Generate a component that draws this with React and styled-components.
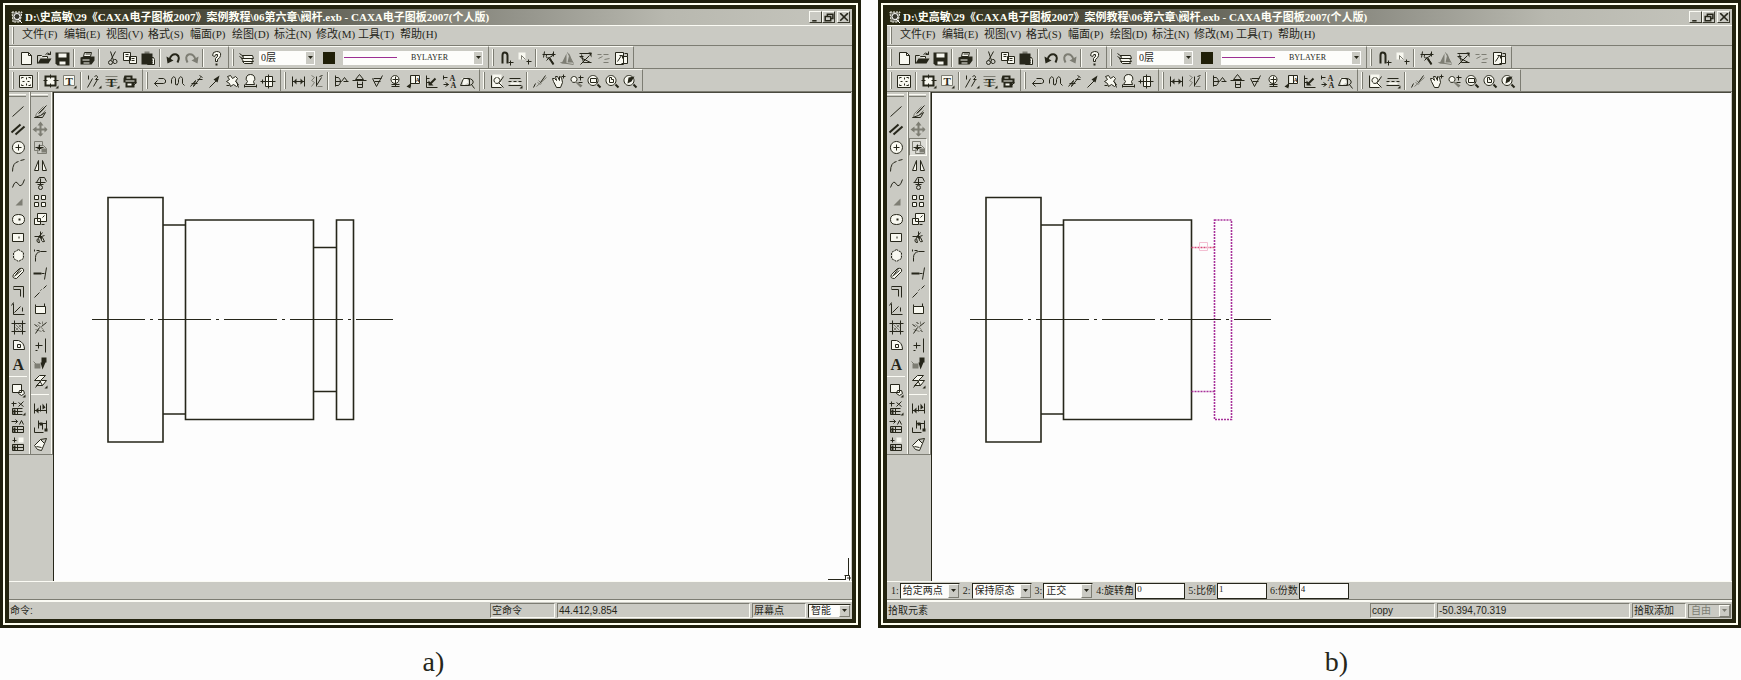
import React, { useId } from "react";
import styled, { createGlobalStyle, css } from "styled-components";

const INK = "#26261a";
const FACE = "#cacac3";
const SHADE = "#7d7d73";
const LIGHT = "#fbfbf4";

// Icons, all on a 16x16 grid
// w: white shape with outline, g: grey fill, k: dark fill, s: dark line, gs: grey line, t: letters
const icons = {
  newFile: { w: "M3 2H10L13 5V14H3Z", s: "M10 2V5H13" },
  open: { w: "M1 5H5L6 6H11V8", k: "M1 13L4 8H15L12 13Z", s: "M1 13V5M9 4Q11 1 14 4M14 1V4H11" },
  save: { k: "M1 2H15V15H3L1 13Z", w2: "M4 3H12V7H4ZM5 11H11V14H5Z" },
  print: { w: "M5 2H12L11 6H4Z", k: "M1 7L4 6H15V10L12 14H1ZM6 3H11V4H6Z", w2: "M3 9H10V10H3ZM4 12H10V13H4Z" },
  cut: { s: "M6 1L9 10M11 1L6 10M6 10A2 2 0 1 0 6 14A2 2 0 0 0 6 10M10 9A2 2 0 1 0 11 13A2 2 0 0 0 10 9" },
  copy: { w: "M1 2H8V10H1ZM7 6H14V13H7Z", s: "M3 4H6M3 6H6M9 8H12M9 10H12" },
  paste: { k: "M1 3H12V14H1Z", g: "M4 1H9V4H4Z", w: "M7 7H13L14 9V14H7Z", s: "M9 10H12M9 12H12" },
  undo: { b: "M4 9Q6 3 11 4Q15 6 12 12", k: "M1 6L8 10L2 13Z" },
  redo: { gb: "M12 9Q10 3 5 4Q1 6 4 12", g: "M15 6L8 10L14 13Z" },
  help: { w: "M4 5Q4 1 8 1Q13 1 12 5Q12 7 9 9V11H7V8Q10 6 9 4Q7 3 6 6Z", k: "M7 13H9V15H7Z" },
  layer: { w: "M4 5H14L15 8H5ZM3 8H13L15 11H5ZM4 11H13L14 13H6Z", s: "M1 3L5 6M1 6L4 8" },
  magnet: { b: "M4 13V5Q4 2 6 2Q9 2 9 5V13", s: "M10 12H15M12 10V15" },
  pick: { w2: "M2 2H9V9H2Z", gs: "M5 9V5M9 9L5 5", s: "M10 11H15M12 9V14" },
  tool1: { s: "M1 4H14M3 1L2 7M12 1V6M5 10L8 7L12 13M5 4Q4 9 8 7Q12 6 11 3", b: "M8 8L12 14" },
  tool2: { g: "M7 3L2 13H7ZM10 3L13 12H8Z", gs: "M1 12L14 14M8 2L14 13" },
  tool3: { s: "M2 3H14M3 7L13 12M12 5L3 14M4 4L6 12H14M2 6H6", k: "M11 2H14V7Z" },
  tool4: { gs: "M2 4H6M8 4H13M3 8L7 6M9 9L14 8M8 12H13" },
  tool5: { w: "M2 2H10V14H2ZM9 6H14V13H8", s: "M4 11L8 5M6 5H9V8M11 3L14 3V6" },
  frame: { w: "M1 2H14V14H1Z", s: "M4 8H6M9 8H11M8 4V6M8 10V12M3 5V4H5M12 5V4H10M3 11V12H5M12 11V12H10" },
  paper: { w: "M2 3H12V12H2Z", b: "M2 3H12V12H2Z", s: "M7 1V5M7 10V14M0 7H4M10 7H15", k: "M12 15H15V12Z" },
  title: { w2: "M2 2H13V12H2Z", gs: "M2 2H13V12H2Z", t: [[4, 11, "T", 11]], k: "M12 15H15V12Z" },
  serial: { s: "M1 14L6 5M7 13L11 6M2 2V6M8 3Q11 1 11 4L9 6H12", k: "M12 15H15V12Z" },
  textT: { gs: "M1 3H13M1 6H13M1 9H13M2 12H12", t: [[3, 13, "T", 12]], k: "M12 15H15V12Z" },
  table: { k: "M2 2H10V5H14V10H12V14H3V9H1V5Z", w2: "M4 4H8V5H4ZM3 7H12V8H3ZM5 10H9V12H5Z", s: "M10 13L14 9" },
  arrowBack: { s: "M6 5H11Q14 6 13 9L11 10H2M5 7L2 10L5 13" },
  wave: { s: "M1 10V6Q3 1 5 5V11Q7 13 8 9V6Q10 1 12 5V10L14 12" },
  zig: { s: "M2 13L7 7L5 13L12 4M3 10H9M9 6H14M11 2L14 4" },
  arrow: { s: "M3 14L10 7", k: "M13 2L11 9L7 6Z" },
  gears: { w: "M3 3L6 2L8 5L11 3L13 5L11 8L14 11L12 13L9 11L6 13L5 10L2 8L5 6Z", s: "M2 12H5M12 8L14 14" },
  stamp: { w: "M8 1A4 4 0 0 1 11 8L12 11H3L5 8A4 4 0 0 1 8 1Z", s: "M2 13H14M2 11V14M14 11V14" },
  hole: { w: "M5 3H12V13H5Z", s: "M0 8H15M8 1V15M2 6V10" },
  dim: { s: "M2 3V13M14 3V13M2 8H14", k: "M3 8L6 5V11ZM13 8L10 5V11Z" },
  coord: { gs: "M3 2L6 4L3 7L6 9L3 13M9 13H14", s: "M8 3V13M8 12L13 4M11 3L14 2" },
  weld: { s: "M2 2V13M2 4H5Q9 8 5 12H2M2 8H8L11 4L14 8M10 8H15" },
  datum: { s: "M8 1L12 6H4ZM1 7H15M6 8V14H11V8M6 11H11" },
  rough: { s: "M3 5L7 13L13 2M5 8H11M4 5H12" },
  tolerance: { w: "M8 2A4 4 0 1 1 7 2ZM4 11H12", s: "M5 6H11M8 3V13M4 13H12" },
  label: { w2: "M6 2H15V10H6Z", s: "M5 2H14V10H5ZM10 2V10M5 6V13H2", k: "M1 13L5 10V15Z", t: [[10, 8, "A", 6]] },
  leader: { s: "M3 2V14H14M3 5H6M3 9H6", b: "M6 11L12 5", k: "M5 12V7L10 12Z" },
  section: { s: "M2 4H6M2 2V6M2 11H7M4 9L7 11L4 13", t: [[8, 7, "A", 8], [9, 14, "A", 8]] },
  detail: { w2: "M2 5L7 4L9 9L4 12Z", s: "M1 12L4 5H10V12ZM9 6A3 3 0 1 1 9 11M12 11L15 15" },
  find: { w2: "M3 1H12V14H3Z", s: "M2 2V14H12M7 4A3 3 0 1 0 8 4M9 9L14 14M14 3L10 9" },
  linetype: { s: "M2 5H13M1 8H4M6 8H9M11 8H14M1 12H14", w2: "M3 9H12V11H3Z", k: "M12 15H15V12Z" },
  brush: { s: "M3 10L1 14M13 2L8 9", gs: "M4 13L14 4M5 9L8 11M6 7L9 10" },
  hand: { w: "M3 8L2 5L4 5L6 7L5 3L7 3L9 7L9 3L11 4L12 9L10 14H6Z", s: "M11 3H15M13 1V5" },
  zoomDyn: { w: "M6 3A3 3 0 1 1 5 3Z", g: "M8 8L14 12L12 14L7 9Z", s: "M10 4H15M12 2V7M10 9H14" },
  zoomWin: { w: "M7 2A5 5 0 1 1 6 2Z", s: "M4 5H10V9H4Z", b: "M11 11L14 14" },
  zoomAll: { w: "M7 2A5 5 0 1 1 6 2Z", s: "M5 4V9H9V6H7V4Z", b: "M11 11L14 14" },
  zoomPrev: { w: "M7 2A5 5 0 1 1 6 2Z", k: "M5 10L6 4L12 3L9 8Z", b: "M11 11L14 14" },
  line: { s: "M2 13L13 3" },
  parallel: { b: "M1 11L10 3M5 13L14 5" },
  circle: { w: "M8 2A6 6 0 1 1 7.900 2Z", s: "M5 8H11M8 5V11" },
  arc: { s: "M2 14Q2 5 8 4M10 3L14 2" },
  spline: { s: "M2 12Q5 3 8 9Q11 13 14 4" },
  point: { g: "M5 12L12 5V12Z" },
  ellipse: { w: "M8 3Q14 3 14 8Q14 13 8 13Q2 13 2 8Q2 3 8 3Z", k: "M8 7H10V9H8Z" },
  rect: { w: "M2 4H13V12H2Z", k: "M8 7H9V9H8Z" },
  polygon: { w2: "M8 3L12 5V11L8 13L4 11V5Z", dash: "M8 2L13 5V11L8 14L3 11V5Z", k: "M7 7H9V9H7Z" },
  capsule: { w: "M3 9L9 3Q14 2 13 6L6 13Q1 13 3 9Z", s: "M5 10L11 5M10 3L4 11" },
  offset: { s: "M3 3H13V14M3 6H10V13M3 4V5" },
  axes: { s: "M3 2V13H14M1 4L3 1M4 11L10 5M12 6V10" },
  hatch: { s: "M1 4H15M1 12H15M4 1V15M12 1V15", gs: "M5 5L11 11M8 5L11 8M5 8L8 11M11 5L5 11" },
  profile: { w: "M3 3H8Q14 5 14 12H3Z", s: "M7 7H10V10H7Z" },
  letter: { t: [[2, 14, "A", 16]] },
  block: { w: "M2 2H11V10H2ZM9 8H13L14 11L11 13L8 11Z", k: "M12 15H15V12Z" },
  lib1: { s: "M2 8H12M2 11H12M2 14H12M2 8V14M7 8V14M3 1V6M1 3H6M8 2L13 6M13 1L8 6", b: "M4 9V14", k: "M12 15H15V12Z" },
  lib2: { s: "M2 8H13M2 11H13M2 14H13M2 8V14M7 8V14M13 8V14M1 3H7M5 1L7 3L5 5M9 6L11 2L13 6", b: "M4 9V14" },
  lib3: { s: "M2 8H13M2 11H13M2 14H13M2 8V14M7 8V14M13 8V14M4 1V6M2 4H6", w2: "M8 1H13V6H8Z", b: "M4 9V14" },
  erase: { s: "M2 14H10L13 9L8 12ZM14 2L6 10", gs: "M11 3L4 10L3 13M12 5L7 10M13 7L8 12" },
  move: { gb: "M8 2V14M2 8H14", g: "M8 0L11 4H5ZM8 15L11 12H5ZM0 8L4 5V11ZM15 8L12 5V11Z" },
  copyMove: { gs: "M2 2H10V6M2 2V11H6M6 6H11L14 9V14H5Z", g: "M9 9H14V13H9Z", s: "M3 8H11M7 5V11M5 9H9" },
  mirror: { w: "M6 3V13H2ZM10 3V13H14Z" },
  rotate: { s: "M4 7L7 2H12L14 6M3 7H13M8 3V9M5 9H11M8 10A2 2 0 1 0 8 14A2 2 0 1 0 8 10" },
  array: { w: "M2 2H6V6H2ZM9 2H13V6H9ZM2 9H6V13H2ZM9 9H13V13H9Z" },
  scale: { w: "M5 2H14V10H5ZM2 7H8V13H2Z", s: "M10 6L12 4M9 13H12" },
  trim: { s: "M2 7H8M8 2V7M10 3L6 8M12 6L6 8M6 9A2 2 0 1 0 7 13ZM10 8A2 2 0 1 0 12 12Z", b: "M7 6L9 9" },
  fillet: { s: "M2 2V4M3 14V10Q3 5 8 4H14M4 3H7" },
  extend: { b: "M1 8H9", s: "M9 8H12M14 2L12 14" },
  breakLine: { s: "M2 14L7 9M8 7L9 6M11 5L14 2" },
  stretch: { w: "M3 5H13V12H3Z", s: "M3 3V5M12 2V5" },
  explode: { s: "M3 14L7 8M9 7L14 3M2 5L5 7M10 11L12 12M6 3L8 4", gs: "M5 5L11 10M3 10L9 12M10 2V5" },
  divide: { s: "M13 1V15M3 8H10M6 5V11M3 13H5" },
  sample: { g: "M2 8H8V13H2Z", k: "M9 2H14V7H9ZM8 7H13L10 14Z", gs: "M1 6L4 9" },
  sheet: { w: "M2 7L7 2H13L8 7ZM4 12L9 7H14L10 12Z", s: "M3 14L7 9M7 7L10 12", k: "M12 15H15V12Z" },
  dimEdit: { s: "M2 3V13M14 3V13M2 10H14M8 5V11", k: "M3 10L6 7V13ZM13 7L10 3V9Z" },
  dimEdit2: { s: "M6 2V10M14 2V12M6 5H14M2 9V14H11M10 5V11", k: "M7 4H10V7H7ZM12 10H15V13H12Z" },
  format: { w: "M2 9L8 3L12 7L9 14L5 13Z", s: "M8 3L14 2L12 7M4 10L9 11" },
};

const Icon = ({ name }) => {
  const i = icons[name];
  return (
    <IconSvg viewBox="-0.5 -0.5 16 16" aria-hidden="true">
      {i.w && <path d={i.w} fill="#f8f8f0" stroke={INK} />}
      {i.g && <path d={i.g} fill={SHADE} />}
      {i.gb && <path d={i.gb} fill="none" stroke={SHADE} strokeWidth="2" />}
      {i.k && <path d={i.k} fill={INK} />}
      {i.w2 && <path d={i.w2} fill="#f8f8f0" />}
      {i.gs && <path d={i.gs} fill="none" stroke={SHADE} />}
      {i.dash && <path d={i.dash} fill="none" stroke={INK} strokeDasharray="2 1" />}
      {i.s && <path d={i.s} fill="none" stroke={INK} />}
      {i.b && <path d={i.b} fill="none" stroke={INK} strokeWidth="2" />}
      {i.t && i.t.map(([x, y, ch, size]) => (
        <text key={y} x={x} y={y} fontSize={size} fontWeight="bold" fontFamily="Liberation Serif, serif" fill={INK}>{ch}</text>
      ))}
    </IconSvg>
  );
};

const menus = [
  ["文件", "(F)"], ["编辑", "(E)"], ["视图", "(V)"], ["格式", "(S)"], ["幅面", "(P)"],
  ["绘图", "(D)"], ["标注", "(N)"], ["修改", "(M)"], ["工具", "(T)"], ["帮助", "(H)"],
];

// "|" is a separator
const fileTools = ["newFile", "open", "save", "|", "print", "|", "cut", "copy", "paste", "|", "undo", "redo", "|", "help"];
const snapTools = ["magnet", "pick", "|", "tool1", "tool2", "tool3", "tool4", "tool5"];
const lowerTools = [
  ["frame", "|", "paper", "title", "|", "serial", "textT", "table"],
  ["arrowBack", "wave", "zig", "arrow", "gears", "stamp", "hole"],
  ["dim", "coord", "|", "weld", "datum", "rough", "tolerance", "label", "leader", "section", "detail"],
  ["find", "linetype", "|", "brush", "hand", "zoomDyn", "zoomWin", "zoomAll", "zoomPrev"],
];
const drawTools = ["line", "parallel", "circle", "arc", "spline", "point", "ellipse", "rect", "polygon", "capsule", "offset", "axes", "hatch", "profile", "letter", "|", "block", "lib1", "lib2", "lib3"];
const editTools = ["erase", "move", "copyMove", "mirror", "rotate", "array", "scale", "trim", "fillet", "extend", "breakLine", "stretch", "explode", "divide", "sample", "sheet", "|", "dimEdit", "dimEdit2", "format"];

const Tools = ({ items, vertical, active }) =>
  items.map((name, i) =>
    name === "|" ? (
      <Separator key={i} $vertical={vertical} />
    ) : (
      <ToolButton key={i} type="button" aria-label={name} aria-pressed={active === name}>
        <Icon name={name} />
      </ToolButton>
    )
  );

const Combo = ({ value, label, prefix, width, kind, disabled, children }) => {
  const id = useId();
  return (
    <>
      {prefix && <FieldLabel htmlFor={id}>{prefix}</FieldLabel>}
      <ComboBox $width={width} $kind={kind}>
        <Select id={id} aria-label={label} defaultValue={value} disabled={disabled} $kind={kind}>
          <option>{value}</option>
        </Select>
        {children}
        <ArrowBox $kind={kind}>
          <svg width="5" height="3" viewBox="0 0 5 3"><path d="M0 0H5L2.500 3Z" fill={disabled ? SHADE : INK} /></svg>
        </ArrowBox>
      </ComboBox>
    </>
  );
};

const NumberField = ({ label, value }) => {
  const id = useId();
  return (
    <>
      <FieldLabel htmlFor={id}>{label}</FieldLabel>
      <TextInput id={id} defaultValue={value} />
    </>
  );
};

// Stepped shaft; with `picked` the right hand flange is the dashed selection
const Shaft = ({ picked }) => (
  <Drawing viewBox="54 93 500 489" preserveAspectRatio="xMinYMin meet" role="img" aria-label="阀杆">
    <g fill="none" stroke={INK} strokeWidth="1.600">
      <path d="M108 197.500H163V442H108Z" />
      <path d="M163 225H185.500M163 414H185.500" />
      <path d="M185.500 220H313.500V419.500H185.500Z" />
      {!picked && <path d="M313.500 247.500H336.500M313.500 391.500H336.500M336.500 220H353.500V419.500H336.500Z" />}
    </g>
    {picked && (
      <g fill="none" stroke="#a8329a" strokeWidth="1.600" strokeDasharray="2 1">
        <path d="M313.500 391.500H336.500M336.500 220H353.500V419.500H336.500Z" />
        <path d="M313.500 247.500H336.500" stroke="#d8487a" />
        <path d="M321.500 242.500H329.500V250.500H321.500Z" stroke="#f3bfd2" strokeWidth="1" strokeDasharray="none" />
      </g>
    )}
    <path d="M92 319.500H393" stroke={INK} fill="none" strokeDasharray="53 5 3 5" />
  </Drawing>
);

const Workspace = ({ picked, children, message, command, coords, state, snap }) => (
  <Frame>
    <Inner>
      <TitleBar>
        <svg width="14" height="14" viewBox="0 0 14 14" aria-hidden="true">
          <path d="M2 2H12L10 12H3Z" fill="#77776a" stroke="#f4f4ea" strokeDasharray="2 1" />
          <circle cx="7" cy="6.500" r="3" fill="#34342a" stroke="#fff" />
          <path d="M8 9L12 13" stroke="#fff" />
        </svg>
        <Title>D:\史高敏\29《CAXA电子图板2007》案例教程\06第六章\阀杆.exb - CAXA电子图板2007(个人版)</Title>
        <WindowButton type="button" aria-label="最小化"><svg viewBox="0 0 10 8"><path d="M2 7H6" /></svg></WindowButton>
        <WindowButton type="button" aria-label="还原"><svg viewBox="0 0 10 8"><path d="M4 3V1H9V5H7M2 3H7V7H2Z" /></svg></WindowButton>
        <WindowButton type="button" aria-label="关闭" $apart><svg viewBox="0 0 10 8"><path d="M2 0L9 7M9 0L2 7" /></svg></WindowButton>
      </TitleBar>
      <MenuBar>
        <Grip />
        {menus.map(([name, key]) => <MenuItem key={name} type="button">{name}{key}</MenuItem>)}
      </MenuBar>
      <ToolRow>
        <Strip><Grip /><Tools items={fileTools} /></Strip>
        <Strip>
          <Grip />
          <Tools items={["layer"]} />
          <LayerFields>
            <Combo label="图层" value="0层" width={56} kind="flat" />
            <Swatch type="button" aria-label="颜色" />
            <Combo label="线型" value="BYLAYER" width={140} kind="line">
              <LineSample />
            </Combo>
          </LayerFields>
        </Strip>
        <Strip><Grip /><Tools items={snapTools} /></Strip>
      </ToolRow>
      <ToolRow>
        {lowerTools.map((items, i) => <Strip key={i}><Grip /><Tools items={items} /></Strip>)}
      </ToolRow>
      <Main>
        <Side>
          <SideColumn><SideGrip /><Tools items={drawTools} vertical /></SideColumn>
          <SideColumn><SideGrip /><Tools items={editTools} vertical active={picked ? "copyMove" : ""} /></SideColumn>
        </Side>
        <Canvas>
          <Shaft picked={picked} />
          {!picked && (
            <Cursor viewBox="0 0 23 23" aria-hidden="true">
              <path d="M20.500 0V17M0 21.500H17M16.500 17.500H21.500V22.500M17.500 17V22M19 20H23" fill="none" stroke={INK} />
            </Cursor>
          )}
        </Canvas>
      </Main>
      <Prompt>{children}</Prompt>
      <StatusBar>
        <Message>{message}</Message>
        <Cell $width={65}>{command}</Cell>
        <Cell $width={193}>{coords}</Cell>
        <Cell $width={54}>{state}</Cell>
        <Combo label="捕捉方式" value={snap} width={43} kind="small" disabled={picked} />
      </StatusBar>
    </Inner>
  </Frame>
);

export default function App() {
  return (
    <>
      <GlobalStyle />
      <Page>
        <Figure>
          <Workspace message="命令:" command="空命令" coords="44.412,9.854" state="屏幕点" snap="智能" />
          <Caption>a)</Caption>
        </Figure>
        <Figure>
          <Workspace picked message="拾取元素" command="copy" coords="-50.394,70.319" state="拾取添加" snap="自由">
            <Combo prefix="1:" value="给定两点" width={60} />
            <Combo prefix="2:" value="保持原态" width={60} />
            <Combo prefix="3:" value="正交" width={50} />
            <NumberField label="4:旋转角" value="0" />
            <NumberField label="5:比例" value="1" />
            <NumberField label="6:份数" value="4" />
          </Workspace>
          <Caption $shift>b)</Caption>
        </Figure>
      </Page>
    </>
  );
}

const GlobalStyle = createGlobalStyle`
  * {
    box-sizing: border-box;
  }
  body {
    margin: 0;
    background: #fdfdfd;
    color: ${INK};
    font-family: "Liberation Serif", "Noto Sans CJK SC", serif;
    font-size: 11px;
  }
  button, select, input {
    font: inherit;
    color: inherit;
    margin: 0;
    padding: 0;
    border: 0;
    border-radius: 0;
    background: none;
  }
`;
const Page = styled.main`
  display: grid;
  grid-template-columns: minmax(0, 861fr) minmax(0, 863fr);
  gap: 17px;
`;
const Figure = styled.figure`
  margin: 0;
`;
const Caption = styled.figcaption`
  padding-top: 18px;
  padding-left: ${({ $shift }) => ($shift ? "54px" : "6px")};
  font-size: 28px;
  line-height: 32px;
  text-align: center;
`;
const Frame = styled.section`
  border: 3px solid #1e1e0c;
  padding: 2px;
  background: #fffff0;
`;
const Inner = styled.div`
  border: 4px solid #24240f;
  background: ${FACE};
`;
const TitleBar = styled.header`
  display: flex;
  align-items: center;
  height: 16px;
  padding: 0 2px 0 1px;
  background: linear-gradient(90deg, #26260f, #56564a 30%, #93938a 60%, #b8b8af 78%, #c6c6be);
`;
const Title = styled.h1`
  flex: 1;
  min-width: 0;
  margin: 0 0 0 1px;
  overflow: hidden;
  white-space: nowrap;
  color: #fffff6;
  font-size: 11px;
  font-weight: bold;
  line-height: 14px;
`;
const WindowButton = styled.button`
  width: 13px;
  height: 12px;
  margin-left: ${({ $apart }) => ($apart ? "2px" : "0")};
  border: 1px solid;
  border-color: ${LIGHT} #3a3a2e #3a3a2e ${LIGHT};
  background: ${FACE};
  svg {
    display: block;
    width: 11px;
    height: 9px;
    fill: none;
    stroke: ${INK};
    stroke-width: 1.4;
  }
`;
const MenuBar = styled.nav`
  display: flex;
  align-items: center;
  height: 21px;
  border-top: 1px solid ${LIGHT};
  border-bottom: 1px solid ${SHADE};
`;
const MenuItem = styled.button`
  width: 42px;
  height: 19px;
  padding: 0 0 3px 5px;
  line-height: 16px;
  text-align: left;
  white-space: nowrap;
`;
const ToolRow = styled.div`
  display: flex;
  height: 23px;
  border-bottom: 1px solid ${SHADE};
`;
const Strip = styled.div`
  display: flex;
  flex: none;
  align-items: center;
  padding-right: 3px;
  border-top: 1px solid ${LIGHT};
  border-right: 1px solid ${SHADE};
`;
const Grip = styled.span`
  flex: none;
  width: 2px;
  height: 17px;
  margin: 0 3px;
  border-left: 1px solid ${LIGHT};
  border-right: 1px solid ${SHADE};
`;
const ToolButton = styled.button`
  display: flex;
  flex: none;
  align-items: center;
  justify-content: center;
  width: 18px;
  height: 18px;
  border: 1px solid transparent;
  &[aria-pressed="true"] {
    border-color: ${SHADE} ${LIGHT} ${LIGHT} ${SHADE};
    background: #dcdcd6;
  }
`;
const IconSvg = styled.svg`
  flex: none;
  width: 16px;
  height: 16px;
`;
const Separator = styled.span`
  flex: none;
  ${({ $vertical }) =>
    $vertical
      ? css`
          width: 18px;
          height: 1px;
          margin: 4px 0;
          background: ${LIGHT};
        `
      : css`
          width: 1px;
          height: 18px;
          margin: 0 3px;
          background: ${LIGHT};
          box-shadow: -1px 0 ${SHADE};
        `}
`;
const LayerFields = styled.div`
  display: flex;
  align-items: center;
  gap: 8px;
  padding: 0 2px 0 4px;
`;
const Swatch = styled.button`
  width: 12px;
  height: 12px;
  background: #201f08;
`;
const LineSample = styled.span`
  position: absolute;
  top: 6px;
  left: 1px;
  width: 53px;
  height: 1px;
  background: #9c2f93;
  pointer-events: none;
`;
const ComboBox = styled.span`
  position: relative;
  display: inline-block;
  flex: none;
  width: ${({ $width }) => $width}px;
  height: ${({ $kind }) => ($kind ? "14px" : "16px")};
`;
const Select = styled.select`
  display: block;
  appearance: none;
  width: 100%;
  height: 100%;
  padding-left: 2px;
  border: 1px solid ${INK};
  border-right-color: ${FACE};
  border-bottom-color: ${FACE};
  background: #fdfdfb;
  font-size: 10px;
  line-height: 12px;
  ${({ $kind }) =>
    ($kind === "flat" || $kind === "line") &&
    css`
      border: 0;
    `}
  ${({ $kind }) =>
    $kind === "line" &&
    css`
      padding-left: 68px;
      font-size: 8px;
    `}
  &:disabled {
    border-color: ${SHADE};
    background: ${FACE};
    color: ${SHADE};
    opacity: 1;
  }
`;
const ArrowBox = styled.span`
  position: absolute;
  top: 1px;
  right: 1px;
  bottom: 1px;
  display: flex;
  align-items: center;
  justify-content: center;
  width: 11px;
  background: ${FACE};
  border: 1px solid;
  border-color: ${LIGHT} ${SHADE} ${SHADE} ${LIGHT};
  pointer-events: none;
  ${({ $kind }) =>
    ($kind === "flat" || $kind === "line") &&
    css`
      width: 8px;
      border-color: ${FACE};
    `}
`;
const Main = styled.div`
  display: flex;
  min-height: 489px;
`;
const Side = styled.aside`
  display: flex;
  align-items: flex-start;
  width: 45px;
  flex: none;
  border-right: 1px solid ${INK};
`;
const SideColumn = styled.div`
  display: flex;
  flex-direction: column;
  align-items: flex-start;
  width: 22px;
  padding-bottom: 1px;
  border-right: 1px solid ${SHADE};
  border-bottom: 1px solid ${SHADE};
  box-shadow: inset -1px 0 ${LIGHT};
`;
const SideGrip = styled.span`
  width: 17px;
  height: 3px;
  margin: 2px 0 5px;
  border-top: 1px solid ${LIGHT};
  border-bottom: 1px solid ${SHADE};
`;
const Canvas = styled.div`
  position: relative;
  flex: 1;
  min-width: 0;
  margin-right: 1px;
  border-top: 1px solid #4a4a40;
  background: #fdfdfd;
`;
const Drawing = styled.svg`
  display: block;
  width: 500px;
  max-width: 100%;
  margin-bottom: -1px;
`;
const Cursor = styled.svg`
  position: absolute;
  right: 0;
  bottom: 0;
  width: 23px;
  height: 23px;
`;
const Prompt = styled.div`
  display: flex;
  align-items: center;
  gap: 1px;
  height: 19px;
  padding-left: 2px;
  border-top: 1px solid ${LIGHT};
  border-bottom: 1px solid ${SHADE};
`;
const FieldLabel = styled.label`
  flex: none;
  padding-left: 2px;
  white-space: nowrap;
  font-size: 10px;
  line-height: 16px;
`;
const TextInput = styled.input`
  width: 50px;
  height: 16px;
  padding: 0 1px 4px;
  border: 1px solid ${INK};
  background: #fdfdfb;
  font-size: 9px;
`;
const StatusBar = styled.footer`
  display: flex;
  align-items: center;
  gap: 2px;
  height: 19px;
  padding-right: 1px;
  border-top: 2px solid ${LIGHT};
  font-family: "Liberation Sans", "Noto Sans CJK SC", sans-serif;
  font-size: 10px;
`;
const Message = styled.p`
  flex: 1;
  min-width: 0;
  margin: 0;
  padding-left: 1px;
  line-height: 14px;
`;
const Cell = styled.span`
  flex: none;
  width: ${({ $width }) => $width}px;
  height: 15px;
  padding-left: 1px;
  border: 1px solid;
  border-color: ${SHADE} ${LIGHT} ${LIGHT} ${SHADE};
  line-height: 13px;
  white-space: nowrap;
`;
